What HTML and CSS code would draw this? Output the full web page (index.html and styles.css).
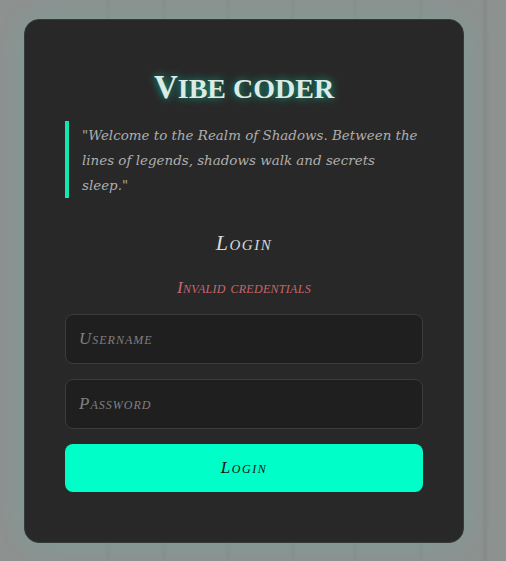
FILE: index.html
```html
<!DOCTYPE html>
<html lang="en">
<head>
<meta charset="utf-8">
<title>Vibe Coder</title>
<link rel="stylesheet" href="styles.css">
</head>
<body>
<main class="card">
  <h1 class="title"><span class="initial">V</span>ibe coder</h1>
  <blockquote class="quote">"Welcome to the Realm of Shadows. Between the lines of legends, shadows walk and secrets sleep."</blockquote>
  <h2 class="heading">Login</h2>
  <p class="error">Invalid credentials</p>
  <form class="form">
    <input class="field" type="text" placeholder="Username">
    <input class="field" type="password" placeholder="Password">
    <button class="submit" type="button">Login</button>
  </form>
</main>
</body>
</html>
```
FILE: styles.css
```css
* { box-sizing: border-box; }
html, body { height: 100%; }
body {
  margin: 0;
  padding: 19px 42px 18px 24px;
  overflow: hidden;
  background-color: #8d9190;
  background-image:
    linear-gradient(90deg, rgba(60,70,68,0) 0 105px, rgba(60,70,68,.05) 108px, rgba(60,70,68,0) 111px 161px, rgba(60,70,68,.05) 164px, rgba(60,70,68,0) 167px 225px, rgba(60,70,68,.05) 228px, rgba(60,70,68,0) 231px 290px, rgba(60,70,68,.05) 293px, rgba(60,70,68,0) 296px 352px, rgba(60,70,68,.05) 355px, rgba(60,70,68,0) 358px 418px, rgba(60,70,68,.05) 421px, rgba(60,70,68,0) 424px 481px, rgba(60,70,68,.09) 485px, rgba(60,70,68,0) 489px);
}
.card {
  height: 524px;
  width: 440px;
  padding: 40px;
  background: #282828;
  border: 1px solid #353b3a;
  border-radius: 15px;
  box-shadow: 0 0 30px rgba(0,255,200,.12);
}
.title {
  margin: 10px 0 0;
  font: 700 28px/35px "Liberation Serif", serif;
  text-transform: uppercase;
  text-align: center;
  color: #dcebe6;
  text-shadow: 0 0 8px rgba(0,255,200,.6);
}
.initial { font-size: 33px; }
.quote {
  margin: 15px 0 0;
  padding: 2px 2px 0 13px;
  border-left: 4px solid #14e6b0;
  font: italic 13.45px/25px "DejaVu Serif", serif;
  color: #aeaeae;
}
.heading {
  margin: 31px 0 0;
  font: italic 400 22px/27px "Liberation Serif", serif;
  font-variant: small-caps;
  letter-spacing: 1.5px;
  text-align: center;
  color: #d8d8d8;
}
.error {
  margin: 22px 0 0;
  font: italic 17px/20px "Liberation Serif", serif;
  font-variant: small-caps;
  letter-spacing: .3px;
  text-align: center;
  color: #c9666c;
}
.form {
  display: flex;
  flex-direction: column;
  gap: 15px;
  margin-top: 16px;
}
.field {
  height: 50px;
  padding: 0 13px;
  background: #1f1f1f;
  border: 1px solid #3c3c3c;
  border-radius: 8px;
  font: italic 17px "Liberation Serif", serif;
  font-variant: small-caps;
  letter-spacing: 1px;
  color: #ddd;
}
.field::placeholder { color: #808080; opacity: 1; }
.submit {
  height: 48px;
  background: #00ffc8;
  border: 0;
  border-radius: 8px;
  font: italic 17px "Liberation Serif", serif;
  font-variant: small-caps;
  letter-spacing: 1.5px;
  color: #111;
}
```
